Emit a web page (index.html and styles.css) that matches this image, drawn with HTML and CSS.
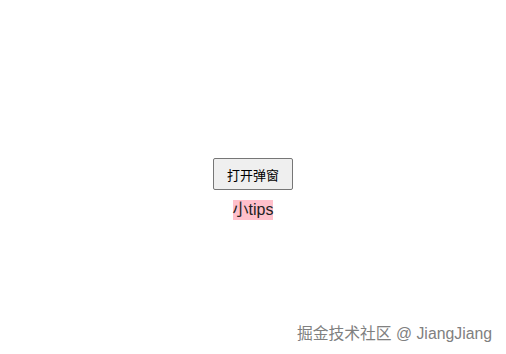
FILE: index.html
```html
<!DOCTYPE html>
<html lang="zh">

<head>
    <meta charset="UTF-8">
    <meta name="viewport" content="width=device-width, initial-scale=1.0">
    <title>弹窗</title>
    <link rel="stylesheet" href="styles.css">
</head>

<body>
    <div class="container">
        <button class="btn">打开弹窗</button>
        <div class="tips">小tips</div>
    </div>
    <div class="watermark">掘金技术社区 @ JiangJiang</div>
</body>

</html>
```

FILE: styles.css
```css
body {
    margin: 0;
    background-color: #fff;
    font-family: "Liberation Sans", "Noto Sans CJK SC", sans-serif;
}

.container {
    display: flex;
    flex-direction: column;
    align-items: center;
    height: 354px;
    padding-top: 158px;
    box-sizing: border-box;
}

.btn {
    width: 80px;
    height: 32px;
    font-size: 13px;
    font-family: "Noto Sans CJK SC", sans-serif;
    color: #000;
    background-color: #efefef;
    border: 1px solid #767676;
    border-radius: 2px;
    padding: 0;
}

.tips {
    margin-top: 10px;
    background-color: pink;
    font-size: 16px;
    line-height: 20px;
    color: #222;
}

.watermark {
    position: absolute;
    right: 14px;
    bottom: 10px;
    font-size: 15.8px;
    color: #808080;
}
```
